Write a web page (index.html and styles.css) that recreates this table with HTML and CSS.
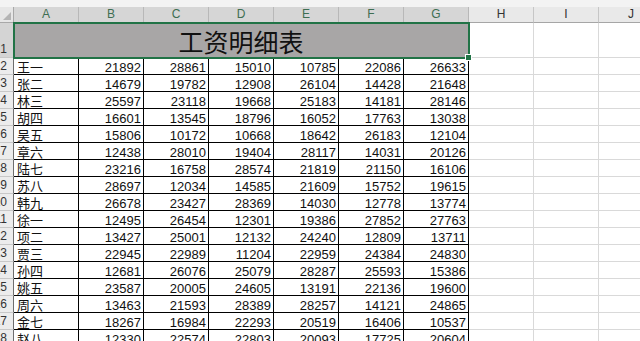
FILE: index.html
```html
<!DOCTYPE html>
<html lang="zh">
<head>
<meta charset="utf-8">
<title>工资明细表</title>
<link rel="stylesheet" href="styles.css">
</head>
<body>
<div class="top"></div>
<div class="sheet">
  <div class="corner"><svg width="8" height="8" viewBox="0 0 8 8"><polygon points="8,0 8,8 0,8" fill="#b4b4b4"/></svg></div>
  <div class="ch sel">A</div><div class="ch sel">B</div><div class="ch sel">C</div><div class="ch sel">D</div><div class="ch sel">E</div><div class="ch sel">F</div><div class="ch sel">G</div><div class="ch">H</div><div class="ch">I</div><div class="ch">J</div>

  <div class="rh sel">1</div>
  <div class="title">工资明细表</div>
  <div class="e"></div><div class="e"></div><div class="e"></div>

  <div class="rh">2</div><div class="d n">王一</div><div class="d">21892</div><div class="d">28861</div><div class="d">15010</div><div class="d">10785</div><div class="d">22086</div><div class="d">26633</div><div class="e"></div><div class="e"></div><div class="e"></div>
  <div class="rh">3</div><div class="d n">张二</div><div class="d">14679</div><div class="d">19782</div><div class="d">12908</div><div class="d">26104</div><div class="d">14428</div><div class="d">21648</div><div class="e"></div><div class="e"></div><div class="e"></div>
  <div class="rh">4</div><div class="d n">林三</div><div class="d">25597</div><div class="d">23118</div><div class="d">19668</div><div class="d">25183</div><div class="d">14181</div><div class="d">28146</div><div class="e"></div><div class="e"></div><div class="e"></div>
  <div class="rh">5</div><div class="d n">胡四</div><div class="d">16601</div><div class="d">13545</div><div class="d">18796</div><div class="d">16052</div><div class="d">17763</div><div class="d">13038</div><div class="e"></div><div class="e"></div><div class="e"></div>
  <div class="rh">6</div><div class="d n">吴五</div><div class="d">15806</div><div class="d">10172</div><div class="d">10668</div><div class="d">18642</div><div class="d">26183</div><div class="d">12104</div><div class="e"></div><div class="e"></div><div class="e"></div>
  <div class="rh">7</div><div class="d n">章六</div><div class="d">12438</div><div class="d">28010</div><div class="d">19404</div><div class="d">28117</div><div class="d">14031</div><div class="d">20126</div><div class="e"></div><div class="e"></div><div class="e"></div>
  <div class="rh">8</div><div class="d n">陆七</div><div class="d">23216</div><div class="d">16758</div><div class="d">28574</div><div class="d">21819</div><div class="d">21150</div><div class="d">16106</div><div class="e"></div><div class="e"></div><div class="e"></div>
  <div class="rh">9</div><div class="d n">苏八</div><div class="d">28697</div><div class="d">12034</div><div class="d">14585</div><div class="d">21609</div><div class="d">15752</div><div class="d">19615</div><div class="e"></div><div class="e"></div><div class="e"></div>
  <div class="rh">10</div><div class="d n">韩九</div><div class="d">26678</div><div class="d">23427</div><div class="d">28369</div><div class="d">14030</div><div class="d">12778</div><div class="d">13774</div><div class="e"></div><div class="e"></div><div class="e"></div>
  <div class="rh">11</div><div class="d n">徐一</div><div class="d">12495</div><div class="d">26454</div><div class="d">12301</div><div class="d">19386</div><div class="d">27852</div><div class="d">27763</div><div class="e"></div><div class="e"></div><div class="e"></div>
  <div class="rh">12</div><div class="d n">项二</div><div class="d">13427</div><div class="d">25001</div><div class="d">12132</div><div class="d">24240</div><div class="d">12809</div><div class="d">13711</div><div class="e"></div><div class="e"></div><div class="e"></div>
  <div class="rh">13</div><div class="d n">贾三</div><div class="d">22945</div><div class="d">22989</div><div class="d">11204</div><div class="d">22959</div><div class="d">24384</div><div class="d">24830</div><div class="e"></div><div class="e"></div><div class="e"></div>
  <div class="rh">14</div><div class="d n">孙四</div><div class="d">12681</div><div class="d">26076</div><div class="d">25079</div><div class="d">28287</div><div class="d">25593</div><div class="d">15386</div><div class="e"></div><div class="e"></div><div class="e"></div>
  <div class="rh">15</div><div class="d n">姚五</div><div class="d">23587</div><div class="d">20005</div><div class="d">24605</div><div class="d">13191</div><div class="d">22136</div><div class="d">19600</div><div class="e"></div><div class="e"></div><div class="e"></div>
  <div class="rh">16</div><div class="d n">周六</div><div class="d">13463</div><div class="d">21593</div><div class="d">28389</div><div class="d">28257</div><div class="d">14121</div><div class="d">24865</div><div class="e"></div><div class="e"></div><div class="e"></div>
  <div class="rh">17</div><div class="d n">金七</div><div class="d">18267</div><div class="d">16984</div><div class="d">22293</div><div class="d">20519</div><div class="d">16406</div><div class="d">10537</div><div class="e"></div><div class="e"></div><div class="e"></div>
  <div class="rh">18</div><div class="d n">赵八</div><div class="d">12330</div><div class="d">22574</div><div class="d">22803</div><div class="d">20093</div><div class="d">17725</div><div class="d">20604</div><div class="e"></div><div class="e"></div><div class="e"></div>
</div>
</body>
</html>
```

FILE: styles.css
```css
html, body {
  margin: 0;
  padding: 0;
  width: 640px;
  height: 341px;
  overflow: hidden;
  background: #ffffff;
}
.top {
  height: 7px;
  background: #f3f3f3;
}
.sheet {
  display: grid;
  grid-template-columns: 14px repeat(10, 65px);
  grid-template-rows: 16px 35px repeat(17, 17px);
  font-family: "Liberation Sans", "Noto Sans CJK SC", sans-serif;
  font-size: 13px;
  color: #111;
}
.corner {
  background: #e6e6e6;
  border-right: 1px solid #a8a8a8;
  border-bottom: 1px solid #a8a8a8;
  display: flex;
  justify-content: flex-end;
  align-items: flex-end;
  padding: 0 2px 2px 0;
  box-sizing: border-box;
}
.corner svg { display: block; }
.ch {
  background: #e9e9e9;
  border-right: 1px solid #c6c6c6;
  border-bottom: 1px solid #a6a6a6;
  font-size: 12px;
  line-height: 15px;
  text-align: center;
  color: #333;
}
.ch.sel {
  background: #d6d6d6;
  color: #3e6e52;
  border-right-color: #b8b8b8;
}
.rh {
  background: #ececec;
  border-right: 1px solid #6e6e6e;
  border-bottom: 1px solid #c8c8c8;
  font-size: 12px;
  line-height: 16px;
  color: #333;
  display: flex;
  justify-content: flex-end;
  align-items: flex-end;
  padding-right: 6px;
  overflow: hidden;
  white-space: nowrap;
  box-sizing: border-box;
}
.rh.sel {
  background: #d4d4d4;
}
.title {
  grid-column: span 7;
  background: #a8a6a6;
  border-right: 1px solid #000;
  border-bottom: 1px solid #000;
  font-family: "Noto Sans CJK SC", sans-serif;
  font-size: 25px;
  line-height: 34px;
  text-align: center;
  color: #111;
  padding-top: 1px;
  box-sizing: border-box;
  position: relative;
  z-index: 1;
  outline: 2px solid #217346;
  outline-offset: -1px;
}
.title::after {
  content: "";
  position: absolute;
  right: -4px;
  bottom: -4px;
  width: 5px;
  height: 5px;
  background: #217346;
  border: 1px solid #fff;
}
.d {
  border-right: 1px solid #000;
  border-bottom: 1px solid #000;
  text-align: right;
  padding: 2px 2px 0 0;
  line-height: 16px;
  box-sizing: border-box;
  white-space: nowrap;
}
.d.n {
  text-align: left;
  padding-left: 3px;
}
.e {
  border-right: 1px solid #d9d9d9;
  border-bottom: 1px solid #d9d9d9;
  box-sizing: border-box;
}
```
